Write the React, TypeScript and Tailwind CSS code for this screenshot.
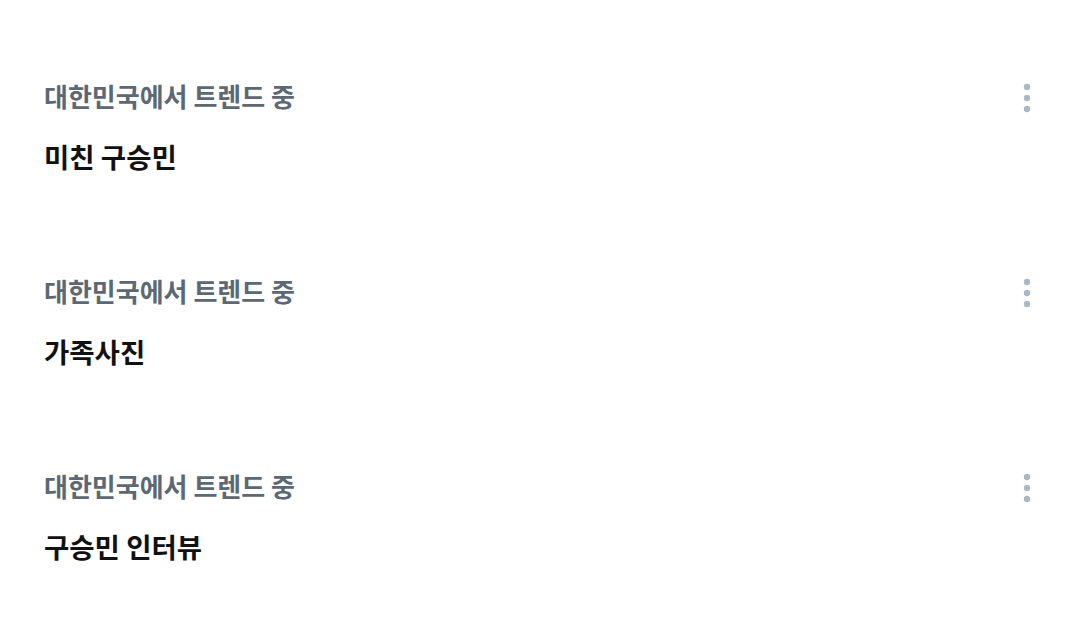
import React from 'react';

const trends = [
  { label: '대한민국에서 트렌드 중', title: '미친 구승민' },
  { label: '대한민국에서 트렌드 중', title: '가족사진' },
  { label: '대한민국에서 트렌드 중', title: '구승민 인터뷰' },
];

function MoreIcon() {
  return (
    <svg width="8" height="30" viewBox="0 0 8 30" className="fill-[#aab9c6]">
      <circle cx="4" cy="4" r="3.2" />
      <circle cx="4" cy="15" r="3.2" />
      <circle cx="4" cy="26" r="3.2" />
    </svg>
  );
}

export default function App() {
  return (
    <div
      className="h-[623px] w-[1080px] overflow-hidden bg-white pt-[79px]"
      style={{ fontFamily: '"Noto Sans CJK KR", "Noto Sans", sans-serif' }}
    >
      {trends.map((trend) => (
        <div key={trend.title} className="flex h-[195px] items-start justify-between pl-[44px] pr-[49px]">
          <div className="flex flex-col gap-[27px]">
            <div className="text-[26px] leading-[33px] font-semibold text-[#5c6873]">{trend.label}</div>
            <div className="text-[27.5px] leading-[34px] font-bold text-[#111111]">{trend.title}</div>
          </div>
          <div className="pt-[4px]">
            <MoreIcon />
          </div>
        </div>
      ))}
    </div>
  );
}
